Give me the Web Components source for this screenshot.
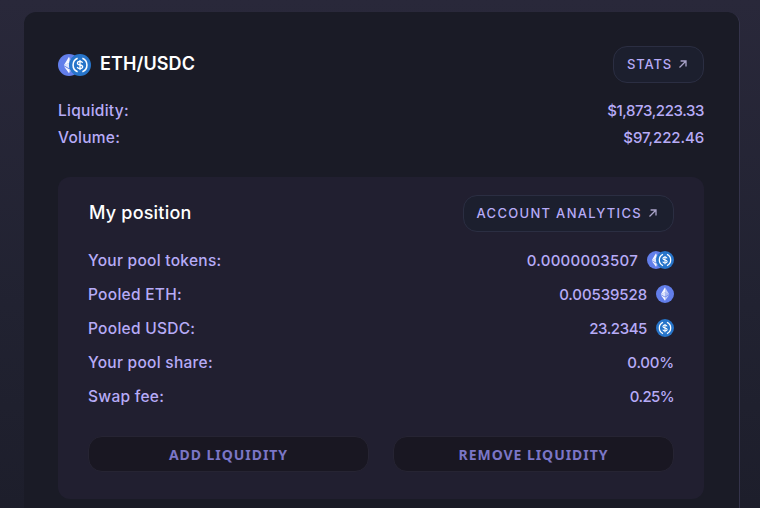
<!DOCTYPE html>
<html>
<head>
<meta charset="utf-8">
<style>
html, body { margin: 0; height: 100%; }
body {
    height: 508px;
    overflow: hidden;
    background: linear-gradient(180deg, #29283a 0%, #212231 60%, #1d1e2b 100%);
    font-family: Inter, "Liberation Sans", sans-serif;
}
</style>
</head>
<body>
<pool-page>
    <pool-card>
        <token-icon slot="icons" kind="pair" size="22"></token-icon>
        <span slot="title">ETH/USDC</span>
        <link-button slot="action" style="--ls: .85px">STATS</link-button>

        <stat-row slot="stats" gap="27">Liquidity:<span slot="value" style="letter-spacing: -.4px">$1,873,223.33</span></stat-row>
        <stat-row slot="stats" gap="27">Volume:<span slot="value" style="letter-spacing: -.1px">$97,222.46</span></stat-row>

        <position-panel slot="panel">
            <link-button slot="action">ACCOUNT ANALYTICS</link-button>
            <stat-row gap="34">Your pool tokens:<span slot="value" style="letter-spacing: .25px">0.0000003507</span><token-icon slot="icon" kind="pair" size="18"></token-icon></stat-row>
            <stat-row gap="34">Pooled ETH:<span slot="value" style="letter-spacing: -.1px">0.00539528</span><token-icon slot="icon" kind="eth" size="18"></token-icon></stat-row>
            <stat-row gap="34">Pooled USDC:<span slot="value" style="letter-spacing: -.4px">23.2345</span><token-icon slot="icon" kind="usdc" size="18"></token-icon></stat-row>
            <stat-row gap="34">Your pool share:<span slot="value" style="letter-spacing: -.2px">0.00%</span></stat-row>
            <stat-row gap="34">Swap fee:<span slot="value" style="letter-spacing: -.6px">0.25%</span></stat-row>
            <action-button slot="buttons">ADD LIQUIDITY</action-button>
            <action-button slot="buttons">REMOVE LIQUIDITY</action-button>
        </position-panel>
    </pool-card>
</pool-page>

<script>
// token glyphs, drawn on a 24 unit box
const ETH_GLYPH = `
    <circle cx="12" cy="12" r="12" fill="#627eea"/>
    <path d="M12 3l-5.6 9.2L12 9.7z" fill="#fff" fill-opacity=".95"/>
    <path d="M12 3l5.6 9.2L12 9.7z" fill="#fff" fill-opacity=".6"/>
    <path d="M6.4 12.2L12 15.5V9.7z" fill="#fff" fill-opacity=".8"/>
    <path d="M17.6 12.2L12 15.5V9.7z" fill="#fff" fill-opacity=".45"/>
    <path d="M6.4 13.3L12 21v-4.5z" fill="#fff" fill-opacity=".95"/>
    <path d="M17.6 13.3L12 21v-4.5z" fill="#fff" fill-opacity=".6"/>`;

const USDC_GLYPH = `
    <circle cx="12" cy="12" r="12" fill="#2775ca"/>
    <path d="M9.4 4.6a8 8 0 0 0 0 14.8M14.6 4.6a8 8 0 0 1 0 14.8" fill="none" stroke="#fff" stroke-width="1.7"/>
    <path d="M14.8 9.7c-.3-1.1-1.3-1.7-2.8-1.7-1.6 0-2.8.8-2.8 2s1 1.7 2.8 2 2.9.8 2.9 2-1.2 2-2.9 2c-1.6 0-2.7-.7-3-1.8M12 6.5v11" fill="none" stroke="#fff" stroke-width="1.4"/>`;

class TokenIcon extends HTMLElement {
    connectedCallback() {
        const kind = this.getAttribute('kind');
        const size = Number(this.getAttribute('size')) || 18;
        this.attachShadow({ mode: 'open' });
        const svg = (glyph, cls) =>
            `<svg class="${cls}" width="${size}" height="${size}" viewBox="0 0 24 24">${glyph}</svg>`;
        let inner;
        if (kind === 'pair') {
            inner = svg(ETH_GLYPH, 'under') + svg(USDC_GLYPH, 'over');
        } else {
            inner = svg(kind === 'eth' ? ETH_GLYPH : USDC_GLYPH, 'one');
        }
        this.shadowRoot.innerHTML = `
<style>
:host { display: inline-flex; align-items: center; flex: none; }
svg { display: block; }
.over { margin-left: ${-Math.round(size * 0.5)}px; }
</style>${inner}`;
    }
}

class LinkButton extends HTMLElement {
    constructor() {
        super();
        this.attachShadow({ mode: 'open' });
        this.shadowRoot.innerHTML = `
<style>
:host {
    display: inline-flex;
    align-items: center;
    gap: 6px;
    height: 37px;
    box-sizing: border-box;
    padding: 0 15px 2px 13px;
    background: #1c1f2e;
    border: 1px solid #2b2e42;
    border-radius: 14px;
    color: #b7abf7;
    font: 500 13px Inter, "Liberation Sans", sans-serif;
    letter-spacing: var(--ls, 1.3px);
    white-space: nowrap;
}
svg { display: block; }
</style>
<slot></slot>
<svg width="10" height="10" viewBox="0 0 10 10" fill="none" stroke="#a9a3c9" stroke-width="1.3">
    <path d="M1.5 8.5L8 2M2.6 2H8v5.4"/>
</svg>`;
    }
}

class ActionButton extends HTMLElement {
    constructor() {
        super();
        this.attachShadow({ mode: 'open' });
        this.shadowRoot.innerHTML = `
<style>
:host {
    display: flex;
    align-items: center;
    justify-content: center;
    height: 36px;
    box-sizing: border-box;
    background: #191722;
    border: 1px solid #262433;
    border-radius: 14px;
    color: #7b76c6;
    font: 700 14px "Noto Sans", sans-serif;
    letter-spacing: .95px;
}
</style>
<slot></slot>`;
    }
}

class StatRow extends HTMLElement {
    constructor() {
        super();
        this.attachShadow({ mode: 'open' });
        this.shadowRoot.innerHTML = `
<style>
:host {
    display: flex;
    align-items: center;
    justify-content: space-between;
    color: #b7abf7;
    font: 500 15px Inter, "Liberation Sans", sans-serif;
}
.label { font-size: 15.5px; letter-spacing: .27px; }
.right { display: flex; align-items: center; gap: 9px; }
</style>
<span class="label"><slot></slot></span>
<span class="right"><slot name="value"></slot><slot name="icon"></slot></span>`;
    }
    connectedCallback() {
        this.style.height = this.getAttribute('gap') + 'px';
    }
}

class PositionPanel extends HTMLElement {
    constructor() {
        super();
        this.attachShadow({ mode: 'open' });
        this.shadowRoot.innerHTML = `
<style>
:host {
    display: block;
    box-sizing: border-box;
    height: 322px;
    padding: 18px 30px 0;
    background: #211f30;
    border-radius: 12px;
}
.head {
    display: flex;
    align-items: center;
    justify-content: space-between;
    margin-bottom: 11px;
}
.title {
    padding: 0 0 2px 1px;
    color: #fff;
    font: 500 18px Inter, "Liberation Sans", sans-serif;
    letter-spacing: .2px;
}
.buttons {
    display: grid;
    grid-template-columns: 1fr 1fr;
    gap: 24px;
    margin-top: 23px;
}
</style>
<div class="head">
    <span class="title">My position</span>
    <slot name="action"></slot>
</div>
<slot></slot>
<div class="buttons"><slot name="buttons"></slot></div>`;
    }
}

class PoolCard extends HTMLElement {
    constructor() {
        super();
        this.attachShadow({ mode: 'open' });
        this.shadowRoot.innerHTML = `
<style>
:host {
    display: block;
    box-sizing: border-box;
    height: 520px;
    padding: 34px 35px 0 34px;
    background: #1a1b26;
    border-right: 1px solid #34334a;
    border-radius: 12px 12px 0 0;
}
.head {
    display: flex;
    align-items: center;
    justify-content: space-between;
    margin-bottom: 14px;
}
.name { display: flex; align-items: center; gap: 9px; }
.title {
    padding-bottom: 2px;
    color: #fff;
    font: 600 18px Inter, "Liberation Sans", sans-serif;
    letter-spacing: .1px;
}
.panel { margin-top: 26px; }
</style>
<div class="head">
    <div class="name"><slot name="icons"></slot><span class="title"><slot name="title"></slot></span></div>
    <slot name="action"></slot>
</div>
<slot name="stats"></slot>
<div class="panel"><slot name="panel"></slot></div>`;
    }
}

class PoolPage extends HTMLElement {
    constructor() {
        super();
        this.attachShadow({ mode: 'open' });
        this.shadowRoot.innerHTML = `
<style>
:host { display: block; padding: 12px 20px 0 24px; }
</style>
<slot></slot>`;
    }
}

customElements.define('token-icon', TokenIcon);
customElements.define('link-button', LinkButton);
customElements.define('action-button', ActionButton);
customElements.define('stat-row', StatRow);
customElements.define('position-panel', PositionPanel);
customElements.define('pool-card', PoolCard);
customElements.define('pool-page', PoolPage);
</script>
</body>
</html>
